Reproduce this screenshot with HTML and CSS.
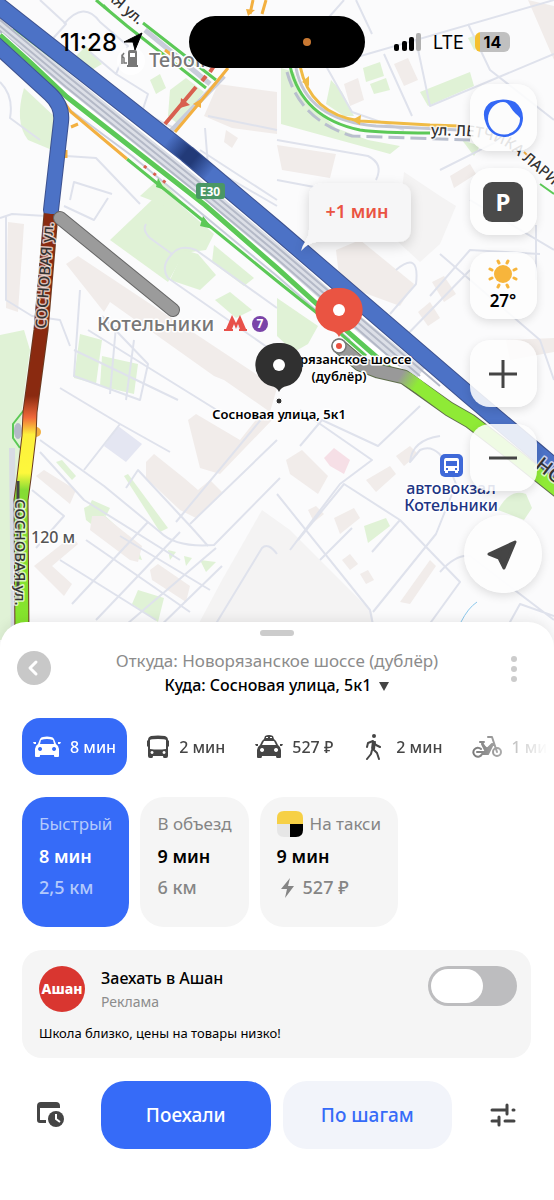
FILE: index.html
```
<!DOCTYPE html>
<html lang="ru">
	<head>
		<meta charset="UTF-8">
		<title>Маршрут</title>
		<meta name="viewport" content="width=device-width,initial-scale=1">
		<link rel="stylesheet" href="styles.css">
	</head>
	<body>
		<div class="map">
			<svg class="map_canvas" viewBox="0 0 554 640" preserveAspectRatio="xMidYMin slice">
				<defs>
					<linearGradient id="jam" gradientUnits="userSpaceOnUse" x1="0" y1="212" x2="0" y2="640">
						<stop offset="0" stop-color="#8a2a10"/>
						<stop offset=".43" stop-color="#8a2a10"/>
						<stop offset=".48" stop-color="#f0683a"/>
						<stop offset=".52" stop-color="#fdf03c"/>
						<stop offset=".61" stop-color="#fdf83c"/>
						<stop offset=".65" stop-color="#85dc34"/>
						<stop offset="1" stop-color="#85e62c"/>
					</linearGradient>
					<linearGradient id="dark" gradientUnits="userSpaceOnUse" x1="168" y1="140" x2="210" y2="174">
						<stop offset="0" stop-color="#223a78" stop-opacity="0"/>
						<stop offset=".4" stop-color="#223a78"/>
						<stop offset=".6" stop-color="#223a78"/>
						<stop offset="1" stop-color="#223a78" stop-opacity="0"/>
					</linearGradient>
					<linearGradient id="start" gradientUnits="userSpaceOnUse" x1="400" y1="376" x2="416" y2="386">
						<stop offset="0" stop-color="#999"/>
						<stop offset="1" stop-color="#8fea36"/>
					</linearGradient>
					<filter id="shadow" x="-30%" y="-30%" width="160%" height="180%">
						<feDropShadow dx="0" dy="4" stdDeviation="6" flood-color="#000" flood-opacity=".16"/>
					</filter>
					<path id="larina" d="M431 135 L468 136 Q498 139 512 151 L570 200"/>
				</defs>

				<!-- parks -->
				<g class="park">
					<path d="M0 335 L24 330 L30 350 L22 410 L14 640 L0 640Z"/>
					<path d="M24 88 L56 118 L52 150 L28 140 Q14 122 24 88Z"/>
					<path d="M152 200 L175 200 L214 234 L206 250 L184 253 L168 282 L110 240Z"/>
					<path d="M140 196 L160 178 L184 204 L176 210Z"/>
					<path d="M184 250 L198 254 L216 275 L200 290 L170 280Z"/>
					<path d="M214 245 L254 278 L244 286 L212 262Z"/>
					<path d="M215 300 L230 292 L252 310 L236 318Z"/>
					<path d="M80 334 L102 340 L96 384 L74 378Z"/>
					<path d="M102 356 L138 364 L134 394 L100 386Z"/>
					<path d="M281 68 L294 72 L304 98 L336 128 L368 140 L400 146 L390 154 L281 124Z"/>
					<path d="M331 80 L342 92 L354 116 L344 116 L326 104Z"/>
					<path d="M363 68 L380 62 L384 76 L366 82Z"/>
					<path d="M370 84 L386 78 L390 90 L374 94Z"/>
					<path d="M420 92 L470 72 L474 86 L428 106Z"/>
					<path d="M468 38 L484 32 L490 46 L474 50Z"/>
					<path d="M277 298 L318 326 L308 344 L294 352 L277 336Z"/>
					<path d="M364 526 L386 518 L390 526 L368 543Z"/>
					<path d="M132 604 L138 590 L164 598 L158 622Z"/>
					<path d="M84 508 L92 504 L136 544 L142 560 L134 558 L86 520Z"/>
					<path d="M168 550 L176 552 L170 560Z M184 556 L192 558 L186 566Z M200 560 L216 562 L206 572Z"/>
					<path d="M124 476 L128 474 L168 528 L160 532Z"/>
					<path d="M92 500 L110 508 L106 516 L88 508Z M56 462 L62 460 L76 476 L72 480Z"/>
					<path d="M498 510 Q510 488 526 494 L532 508 L524 520Z"/>
					<path d="M170 90 L186 78 L204 92 L178 124 L168 116Z"/>
					<path d="M72 60 L86 46 L102 64 L92 70Z M150 80 L160 74 L166 88 L156 94Z"/>
					<path d="M462 140 L480 146 L474 156Z M530 448 L544 460 L540 468Z"/>
				</g>

				<!-- buildings -->
				<g class="house">
					<path d="M204 116 L218 84 L277 92 L277 134 L232 128Z"/>
					<path d="M8 222 L24 224 L18 312 L6 308Z"/>
					<path d="M66 264 L78 256 L277 388 L270 412 L224 380 L214 376 L110 302 L104 312Z"/>
					<path d="M226 130 L238 138 L232 148 L224 142Z"/>
					<path d="M344 84 L358 78 L364 100 L350 106Z M394 64 L408 58 L418 80 L404 86Z"/>
					<path d="M336 250 L360 240 L414 284 L400 306 L340 284Z"/>
					<path d="M432 282 L444 276 L456 294 L444 302Z M418 312 L430 302 L440 318 L428 326Z"/>
					<path d="M286 460 L302 450 L328 476 L318 494 L290 474Z"/>
					<path d="M334 518 L354 508 L360 518 L340 534Z M308 510 L316 506 L324 514 L314 522Z"/>
					<path d="M400 602 L430 560 L436 566 L410 604Z M342 560 L350 554 L358 564 L350 570Z M360 574 L368 570 L374 580 L366 584Z"/>
					<path d="M188 420 L196 414 L240 440 L262 412 L272 420 L220 474 L200 468Z"/>
					<path d="M146 462 L154 454 L184 478 L198 490 L210 480 L222 492 L196 518 L180 510 L146 478Z"/>
					<path d="M36 476 L44 470 L76 490 L70 504Z M92 516 L104 516 L142 546 L138 562 L130 560 L90 530Z"/>
					<path d="M34 566 L72 536 L78 544 L52 566 L72 584 L64 596Z M150 570 L158 564 L190 586 L186 602 L152 580Z"/>
					<path d="M506 340 L554 338 L554 352 L510 360Z M528 0 L554 6 L554 60Z"/>
					<path d="M396 456 L410 446 L418 454 L404 466Z M366 480 L390 466 L396 474 L376 492Z"/>
					<path d="M277 145 L336 154 L330 178 L282 170Z M450 176 L470 164 L476 174 L454 188Z"/>
				</g>
				<path class="zone" d="M262 510 L290 530 L372 612 L376 640 L190 640 L222 580Z"/>
				<path class="zone" d="M404 172 L440 196 L456 206 L440 244 L420 262 L396 240Z"/>
				<path fill="#f6dfe6" d="M324 458 L334 448 L350 460 L344 474 L330 466Z"/>
				<path fill="#e4e6f2" d="M104 446 L118 426 L142 444 L126 462Z"/>

				<!-- side streets -->
				<g class="lane">
					<path d="M40 0 L66 24 L48 44 L88 84"/>
					<path d="M64 24 Q84 0 100 22 L128 46 L116 74 L90 52"/>
					<path d="M116 74 L148 94 L142 112 L178 130"/>
					<path d="M0 82 Q14 96 10 118 L40 140"/>
					<path d="M66 156 L96 158 L140 204 M70 200 L74 182 L112 194"/>
					<path d="M0 218 L12 214 L46 216 M6 216 L6 300 L32 316 L60 320 L70 346"/>
					<path d="M64 206 L94 220 L108 198"/>
					<path d="M146 224 Q142 230 150 238 L172 254 Q160 266 168 278 L277 354"/>
					<path d="M172 254 Q180 244 196 250 L277 308"/>
					<path d="M80 290 L74 376 L140 400 L148 364 L102 316"/>
					<path d="M88 330 L220 412 M74 350 L178 400 M116 326 L110 394 M134 340 L126 400"/>
					<path d="M40 440 L104 486 L160 532 Q176 548 214 545 L280 478"/>
					<path d="M40 452 L84 500 L180 560 M36 548 L64 516 L32 490"/>
					<path d="M84 470 L120 424 L60 388 M120 424 L170 452"/>
					<path d="M126 488 L138 470 L192 528 L208 546"/>
					<path d="M190 524 L277 440 M176 522 L264 416"/>
					<path d="M72 604 L148 522 M96 620 L180 532 M120 630 L216 548 M150 636 L222 566"/>
					<path d="M60 560 L156 620 M86 540 L190 612 M120 536 L210 590"/>
					<path d="M206 640 L262 548 Q268 542 277 554"/>
					<path d="M277 494 L370 610 L376 640 M290 550 L340 484 L372 460 L300 410"/>
					<path d="M298 540 L344 484 L400 520 L372 552 M320 560 L352 528 M400 520 L460 582 L418 640"/>
					<path d="M373 612 L436 534 L456 484 Q440 440 420 450 L410 462 Q412 440 440 436"/>
					<path d="M300 446 L322 420 L378 446 L420 406"/>
					<path d="M396 270 Q420 250 416 284 L390 314 M430 296 L470 250 L540 254"/>
					<path d="M340 300 L398 344 L470 270 M398 344 L500 420"/>
					<path d="M277 180 L330 190 L400 236 M277 140 L368 156 Q384 164 376 180"/>
					<path d="M326 66 L352 112 L404 130 M326 66 L554 0 M384 54 L412 116 M300 50 L344 0 M356 0 L372 34"/>
					<path d="M416 40 L430 106 L554 54 M468 24 L490 70 L554 120"/>
					<path d="M205 128 L208 166 L277 206 M208 116 L277 130 M200 150 L277 200"/>
					<path d="M440 170 L520 130 M470 200 L554 250 M536 225 L536 280 M440 254 L540 340 L554 380"/>
					<path d="M440 572 Q456 554 470 556 L554 620 M500 640 L520 604 L554 616"/>
				</g>
				<path fill="none" stroke="#8cc8ec" stroke-width="1" d="M461 622 Q468 608 477 602"/>

				<!-- highway -->
				<g fill="none">
					<path stroke="#fff" stroke-width="30" d="M-6 18 L66 79 L200 181 L277 248 L354 316 L430 376"/>
					<path stroke="#dcdfe7" stroke-width="14" d="M-6 20 L66 80 L200 188 L277 252 L354 320 L420 374"/>
					<path class="stripes" d="M-6 15 L66 75 L200 183 L277 247 L440 386"/>
					<path class="stripes" d="M-6 21 L66 81 L200 189 L277 253 L420 376"/>
					<path class="stripes" d="M-6 26 L66 87 L200 195 L277 259 L400 366"/>
					<path class="stripes thin" d="M62 104 L132 156 L277 276 L350 340"/>
					<path class="green_line" d="M14 28 L66 68 L166 141 L236 201 L277 237 L310 266"/>
					<path stroke="#fff" stroke-width="7" d="M0 35 L30 62 L67 97 L205 205 L277 268 L340 325 L396 374"/>
					<path stroke="#5cc957" stroke-width="5" d="M0 35 L30 62 L67 97 L205 205 L277 268 L340 325 L396 374"/>
					<path class="green_line" d="M127 159 L190 210 L277 281 L317 313 L366 356"/>
					<path stroke="#f3b040" stroke-width="3" d="M64 102 L71 112 L127 159 M71 127 L78 124 M66 150 L66 158"/>
					<path stroke="#d8604f" stroke-width="3" stroke-dasharray="3 9" d="M144 166 L170 186"/>
					<path fill="#5cc957" d="M203 216 L213 229 L200 226Z M158 178 L165 190 L156 187Z"/>
				</g>

				<!-- streets with traffic -->
				<g fill="none">
					<path stroke="#c9cdda" stroke-width="5" d="M145 30 L210 84 M224 76 L170 132"/>
					<path class="green_line" d="M96 0 L127 26 L206 88 M143 23 L216 80"/>
					<path stroke="#f3b040" stroke-width="3" d="M228 68 L201 101 L175 132 M253 0 L250 14 M266 0 L262 14 M165 50 L173 56"/>
					<path stroke="#d8604f" stroke-width="4" d="M214 66 L210 72 M206 76 L202 81 M196 87 L165 124"/>
					<path fill="#d8604f" d="M181 98 L180 108 L190 105Z"/>
					<path fill="#f3b040" d="M201 99 L193 104 L201 108Z M248 16 L255 10 L246 9Z"/>
					<path fill="#5cc957" d="M110 10 L103 8 L104 4Z"/>
					<path stroke="#b9bfce" stroke-width="3" stroke-dasharray="16 6" d="M287 72 Q300 120 352 136 L470 140"/>
					<path stroke="#c3c7d4" stroke-width="3" d="M296 68 Q306 120 376 126 L460 130"/>
					<path class="green_line" d="M290 66 Q302 118 360 130 Q380 133 430 133"/>
					<path stroke="#f0bb45" stroke-width="3" d="M300 66 Q310 114 360 121 L430 125 L459 126"/>
					<path fill="#f0bb45" d="M302 82 L309 76 L309 86Z M352 120 L361 115 L360 125Z"/>
					<path stroke="#f3b040" stroke-width="2" d="M524 152 L532 160"/>
					<path stroke="#5cc957" stroke-width="2" d="M540 184 L554 194"/>
					<path stroke="#d8dbe4" stroke-width="6" d="M12 448 L14 640"/>
					<path stroke="#5cc957" stroke-width="2" d="M24 410 L13 424 L13 438 L20 448"/>
					<circle cx="36" cy="432" r="5" fill="#f3b040"/>
				</g>
				<ellipse cx="18" cy="431" rx="4" ry="8" fill="#b4b9c8"/>

				<!-- routes -->
				<g class="route">
					<path stroke="#3d5290" stroke-width="18" d="M-10 -1 L0 7 L187 154 L277 230 L470 396 L540 455 L570 480"/>
					<path stroke="#4c72c6" stroke-width="16" d="M-10 -1 L0 7 L187 154 L277 230 L470 396 L540 455 L570 480"/>
					<path stroke="url(#dark)" stroke-width="16" stroke-linecap="butt" d="M168 139 L187 154 L210 173"/>
					<path stroke="#3d5290" stroke-width="16" d="M-8 41 L50 94 Q63 106 61 122 L51 210"/>
					<path stroke="#4c72c6" stroke-width="14" d="M-8 41 L50 94 Q63 106 61 122 L51 210"/>
					<path stroke="#6b3a20" stroke-width="15" stroke-linecap="butt" d="M51 214 L41 330 L30 412 L29 436 L24 478 L21 500 L22 640"/>
					<path stroke="url(#jam)" stroke-width="13" stroke-linecap="butt" d="M51 214 L41 330 L30 412 L29 436 L24 478 L21 500 L22 640"/>
					<path stroke="#666" stroke-width="14" d="M60 218 L173 310"/>
					<path stroke="#9b9b9b" stroke-width="12" d="M60 218 L173 310"/>
					<path stroke="#5f6e4c" stroke-width="15" d="M339 346 L360 364 L378 371 L404 377 L449 409 L470 421 L500 444 L570 500"/>
					<path stroke="#8fea36" stroke-width="13" d="M408 379 L449 409 L470 421 L500 444 L570 500"/>
					<path stroke="url(#start)" stroke-width="13" d="M339 346 L360 364 L378 371 L404 377 L418 386"/>
				</g>
				<path stroke="#444" stroke-width="3" d="M18 481 L18 600"/>

				<!-- captions -->
				<g class="label">
					<text class="street" transform="translate(46 329) rotate(-86)">СОСНОВАЯ ул.</text>
					<text class="street" transform="translate(15 499) rotate(90)">СОСНОВАЯ ул.</text>
					<text class="street" transform="translate(105 -3) rotate(40)">АЯ ул.</text>
					<text class="street"><textPath href="#larina">ул. ЛЕТЧИКА ЛАРИНА</textPath></text>
					<text class="street big" transform="translate(534 467) rotate(38)">НО</text>
					<text class="place" x="149" y="67">Teboil</text>
					<text class="place" x="97" y="331">Котельники</text>
					<text class="scale" x="31" y="543">120 м</text>
				</g>
				<circle cx="131" cy="61" r="14" fill="#fff" opacity=".8"/>
				<path fill="#777" fill-rule="evenodd" d="M128 52 q0 -2 2 -2 h5 q2 0 2 2 v13 h1 v2 h-11 v-2 h1Z M130 53 v4 h5 v-4Z"/>
				<path fill="none" stroke="#777" stroke-width="1.5" d="M127 63 h-3 v-5 l-2 -2 v8 M122 56 l2 -3"/>
				<path fill="#e8504a" d="M224 331 V329 H226 L232 315 L236 323 L240 315 L246 329 H247 V331 H239 V329 H240 L238 324 L236 329 L234 324 L232 329 H233 V331Z"/>
				<circle cx="260" cy="324" r="8" fill="#7a44a8"/>
				<text class="line_no" x="260" y="328">7</text>
				<rect x="196" y="183" width="29" height="16" rx="3" fill="#4a9765"/>
				<text class="road_no" x="210" y="196">E30</text>

				<g fill="#3f69d8">
					<rect x="440" y="454" width="23" height="23" rx="5"/>
					<path fill="#fff" fill-rule="evenodd" d="M446 458 h11 q2 0 2 3 v10 h-1 v2 h-3 v-2 h-7 v2 h-3 v-2 h-1 v-10 q0 -3 2 -3Z M446 461 v5 h11 v-5Z M446 468 v2 h2 v-2Z M455 468 v2 h2 v-2Z"/>
				</g>
				<g class="label station">
					<text x="451" y="494">автовокзал</text>
					<text x="451" y="511">Котельники</text>
				</g>

				<g filter="url(#shadow)">
					<path fill="#f6f6f7" d="M325 183 H397 Q411 183 411 197 V228 Q411 242 397 242 H316 Q308 243 301 251 Q302 246 306 240 Q309 236 309 230 V197 Q309 183 325 183Z"/>
				</g>
				<text class="delay" x="357" y="218">+1 мин</text>

				<!-- pins -->
				<circle cx="339" cy="346" r="7" fill="#fff" stroke="#777" stroke-width="1.5"/>
				<circle cx="339" cy="346" r="3" fill="#e8503f"/>
				<g class="label point">
					<text x="339" y="364">Новорязанское шоссе</text>
					<text x="339" y="381">(дублёр)</text>
					<text x="279" y="419">Сосновая улица, 5к1</text>
				</g>
				<path fill="#ea5442" d="M339 288 a22 22 0 0 1 8 43 q-6 1 -8 6 q-2 -5 -8 -6 a22 22 0 0 1 8 -43Z"/>
				<circle cx="339" cy="310" r="6" fill="#fff"/>
				<path fill="#303030" d="M279 343 a22 22 0 0 1 8 43 q-6 1 -8 6 q-2 -5 -8 -6 a22 22 0 0 1 8 -43Z"/>
				<circle cx="279" cy="365" r="6" fill="#fff"/>
				<circle cx="279" cy="401" r="3" fill="#303030" stroke="#fff" stroke-width="1"/>
			</svg>

			<div class="status">
				<div class="status_left">
					<span class="time">11:28</span>
					<svg width="21" height="20" viewBox="0 0 21 20"><path stroke="#000" stroke-linejoin="round" d="M20 1 L13 18 L11 10 L2 10Z"/></svg>
				</div>
				<div class="island"><span class="island_dot"></span></div>
				<div class="status_right">
					<svg width="28" height="18" viewBox="0 0 28 18">
						<rect x="0" y="11" width="5" height="7" rx="2"/>
						<rect x="8" y="8" width="5" height="10" rx="2"/>
						<rect x="15" y="4" width="5" height="14" rx="2"/>
						<rect x="22" y="0" width="5" height="18" rx="2" fill="#b0b0b0"/>
					</svg>
					<span class="net">LTE</span>
					<span class="battery">14</span>
				</div>
			</div>

			<div class="controls">
				<button class="tool" aria-label="Алиса">
					<svg width="42" height="40" viewBox="0 0 42 40">
						<path fill="#3468f5" d="M9 4 Q21 -1 33 4 Q41 10 41 20 A19 19 0 0 1 4 26 Q-2 11 9 4Z"/>
						<path fill="#fcfcfc" d="M21 4 C25 4 27 7 29 10 C31 14 36 17 38 20 A16 16 0 0 1 6 21 C6 11 14 4 21 4Z"/>
					</svg>
				</button>
				<button class="tool" aria-label="Парковки"><span class="parking">P</span></button>
				<button class="tool weather">
					<svg width="30" height="30" viewBox="0 0 30 30">
						<circle cx="15" cy="15" r="9" fill="#f7b53c"/>
						<path stroke="#f7b53c" stroke-width="3" stroke-linecap="round" d="M11 4 L10 2 M19 4 L20 2 M26 11 L28 10 M26 19 L28 20 M19 26 L20 28 M11 26 L10 28 M4 19 L2 20 M4 11 L2 10"/>
					</svg>
					<span>27°</span>
				</button>
				<button class="tool zoom_in" aria-label="Приблизить">
					<svg width="28" height="28" viewBox="0 0 28 28"><path stroke="#444" stroke-width="3" d="M14 0 V28 M0 14 H28"/></svg>
				</button>
				<button class="tool" aria-label="Отдалить">
					<svg width="28" height="28" viewBox="0 0 28 28"><path stroke="#444" stroke-width="3" d="M0 14 H28"/></svg>
				</button>
				<button class="tool locate" aria-label="Моё местоположение">
					<svg width="34" height="34" viewBox="0 0 34 34"><path fill="#454545" stroke="#454545" stroke-width="3" stroke-linejoin="round" d="M29 5 L18 31 L13 21 L3 17Z"/></svg>
				</button>
			</div>
		</div>

		<div class="sheet">
			<div class="handle"></div>
			<div class="head">
				<button class="back" aria-label="Назад">
					<svg width="34" height="34" viewBox="0 0 34 34"><path fill="none" stroke="#fff" stroke-width="3" stroke-linecap="round" stroke-linejoin="round" d="M19 11 L13 17 L19 23"/></svg>
				</button>
				<div class="address">
					<a class="from" href="#">Откуда: Новорязанское шоссе (дублёр)</a>
					<a class="to" href="#">Куда: Сосновая улица, 5к1 <i class="arrow"></i></a>
				</div>
				<button class="more" aria-label="Ещё"><i></i><i></i><i></i></button>
			</div>

			<div class="modes">
				<button class="mode active">
					<svg width="28" height="24" viewBox="0 0 28 24"><path fill="currentColor" fill-rule="evenodd" d="M7 4 Q8 2 10 2 Q14 1 18 2 Q20 2 21 4 L23 9 Q26 11 26 14 V21 q0 1 -1 1 h-3 q-1 0 -1 -1 v-1 H7 v1 q0 1 -1 1 H3 q-1 0 -1 -1 V14 Q2 11 5 9Z M8 5 L7 9 H21 L20 5 Q14 3 8 5Z M7 12 a2 2 0 1 0 0.1 0Z M21 12 a2 2 0 1 0 0.1 0Z M0 7 h3 v2 h-2Z M25 7 h3 l-1 2 h-2Z"/></svg>
					8 мин
				</button>
				<button class="mode">
					<svg width="24" height="24" viewBox="0 0 24 24"><path fill="currentColor" fill-rule="evenodd" d="M5 1 Q12 0 19 1 Q22 2 22 5 L23 6 V11 L22 12 V21 q0 2 -2 2 h-2 q-1 0 -1 -2 H7 q0 2 -1 2 H4 q-2 0 -2 -2 V12 L1 11 V6 L2 5 Q2 2 5 1Z M4 5 V14 Q12 15 20 14 V5 Q19 4 12 4 Q5 4 4 5Z M6 16 a1.500 1.500 0 1 0 .1 0Z M18 16 a1.500 1.500 0 1 0 .1 0Z"/></svg>
					2 мин
				</button>
				<button class="mode">
					<svg width="28" height="24" viewBox="0 0 28 24"><path fill="currentColor" fill-rule="evenodd" d="M10 1 Q14 -1 18 1 L19 4 L21 6 L23 10 Q26 12 26 15 V22 q0 1 -1 1 h-3 q-1 0 -1 -2 H7 q0 2 -1 2 H3 q-1 0 -1 -1 V15 Q2 12 5 10 L7 6 L9 4Z M9 6 L7 10 H21 L19 6Z M7 13 a2 2 0 1 0 .1 0Z M21 13 a2 2 0 1 0 .1 0Z M0 9 h3 v2 h-2Z M25 9 h3 l-1 2 h-2Z M11 2 h2 v1 h-2Z M15 2 h2 v1 h-2Z"/></svg>
					527 ₽
				</button>
				<button class="mode">
					<svg width="24" height="26" viewBox="0 0 24 26"><circle cx="11" cy="2" r="2" fill="currentColor"/><path fill="none" stroke="currentColor" stroke-width="2" stroke-linecap="round" stroke-linejoin="round" d="M4 13 L5 9 L10 7 L13 11 L17 13 M11 8 L10 15 L14 19 L16 25 M9 16 L8 20 L4 25"/><path stroke="currentColor" stroke-width="4" d="M11 7 L10 15"/></svg>
					2 мин
				</button>
				<button class="mode">
					<svg width="30" height="24" viewBox="0 0 30 24"><g fill="none" stroke="currentColor" stroke-width="2" stroke-linecap="round" stroke-linejoin="round"><circle cx="25" cy="17" r="4"/><path d="M9 14 A4.500 4.500 0 1 0 10 19 H16 L21 9 M8 7 H12 M10 7 L15 18 M5 17 H15 M16 2 H20 L25 17"/><path fill="currentColor" d="M10 9 L15 19 L20 9 L15 14Z"/></g></svg>
					1 мин
				</button>
			</div>

			<div class="cards">
				<button class="card active">
					<span class="card_name">Быстрый</span>
					<b>8 мин</b>
					<span class="card_info">2,5 км</span>
				</button>
				<button class="card">
					<span class="card_name">В объезд</span>
					<b>9 мин</b>
					<span class="card_info">6 км</span>
				</button>
				<button class="card">
					<span class="card_name">
						<svg width="26" height="26" viewBox="0 0 26 26"><path fill="#f6d046" d="M0 13 V7 Q0 0 7 0 H19 Q26 0 26 7 V13Z"/><path fill="#e6e6e6" d="M0 13 H13 V26 H7 Q0 26 0 19Z"/><path d="M13 13 H26 V19 Q26 26 19 26 H13Z"/></svg>
						На такси
					</span>
					<b>9 мин</b>
					<span class="card_info">
						<svg width="22" height="22" viewBox="0 0 22 22"><path fill="#858585" d="M13 1 L4 12 H10 L8 21 L17 9 H11Z"/></svg>
						527 ₽
					</span>
				</button>
			</div>

			<div class="ad">
				<div class="ad_top">
					<div class="ad_logo">Ашан</div>
					<label class="ad_text" for="stop">
						<span class="ad_title">Заехать в Ашан</span>
						<span class="ad_mark">Реклама</span>
					</label>
					<input class="switch" type="checkbox" id="stop">
				</div>
				<p>Школа близко, цены на товары низко!</p>
			</div>

			<div class="actions">
				<button class="icon_btn" aria-label="Время поездки">
					<svg width="28" height="28" viewBox="0 0 28 28"><path fill="#454545" d="M0 5 Q0 1 4 1 H19 Q23 1 23 5 V7 H3 V19 H9 V22 H3 Q0 22 0 19Z"/><circle cx="19" cy="18" r="10" fill="#fff"/><circle cx="19" cy="18" r="8" fill="#454545"/><path fill="none" stroke="#fff" stroke-width="2" d="M19 13 V18 L23 21"/></svg>
				</button>
				<button class="go">Поехали</button>
				<button class="steps">По шагам</button>
				<button class="icon_btn last" aria-label="Настройки">
					<svg width="26" height="24" viewBox="0 0 26 24"><path fill="none" stroke="#454545" stroke-width="3" stroke-linecap="round" d="M2 7 H17 M17 2 V11 M23 7 H24 M2 18 H9 M9 14 V22 M15 18 H24"/></svg>
				</button>
			</div>
		</div>
	</body>
</html>
```
FILE: styles.css
```
* {
	box-sizing: border-box;
	margin: 0;
	padding: 0;
}
body {
	display: flex;
	flex-direction: column;
	min-height: 100vh;
	background: #fff;
	color: #000;
	font-family: "Noto Sans", sans-serif;
	font-size: 16px;
}
button {
	border: none;
	background: none;
	color: inherit;
	font: inherit;
	cursor: pointer;
}
a {
	color: inherit;
	text-decoration: none;
}
svg {
	display: block;
	flex: none;
}

/* map */
.map {
	position: relative;
	flex: 1;
	min-height: 620px;
	background: #fbfbfc;
}
.map_canvas {
	position: absolute;
	top: 0;
	left: 0;
	width: 100%;
	height: 100%;
}
.park {
	fill: #e0f2d6;
}
.house {
	fill: #f1ecea;
}
.zone {
	fill: #f4f3f3;
}
.lane {
	fill: none;
	stroke: #dfe2ec;
	stroke-width: 2;
	stroke-linejoin: round;
}
.stripes {
	stroke: #b4b9c7;
	stroke-width: 2;
}
.stripes.thin {
	stroke: #c9cdda;
}
.green_line {
	stroke: #5cc957;
	stroke-width: 3;
}
.route {
	fill: none;
	stroke-linecap: round;
	stroke-linejoin: round;
}
.label text {
	paint-order: stroke;
	stroke: #fff;
	stroke-width: 3px;
	stroke-linejoin: round;
}
.label .street {
	font-size: 15px;
	font-weight: 500;
	fill: #333;
	stroke: rgba(255, 255, 255, .7);
}
.label .big {
	font-size: 20px;
}
.label .place {
	font-size: 20px;
	font-weight: 500;
	fill: #777;
}
.label .scale {
	font-size: 16px;
	font-weight: 500;
	fill: #555;
}
.line_no {
	font-size: 12px;
	font-weight: 700;
	fill: #fff;
	text-anchor: middle;
}
.road_no {
	font-size: 12px;
	font-weight: 700;
	fill: #fff;
	text-anchor: middle;
}
.station {
	font-size: 16px;
	font-weight: 500;
	fill: #1d3584;
	text-anchor: middle;
}
.delay {
	font-size: 18px;
	font-weight: 600;
	fill: #ea5442;
	text-anchor: middle;
}
.point {
	font-size: 13px;
	font-weight: 600;
	text-anchor: middle;
}

/* status bar */
.status {
	position: relative;
	display: grid;
	grid-template-columns: 1fr auto 1fr;
	align-items: center;
	height: 84px;
	font-family: Inter, sans-serif;
}
.status_left,
.status_right {
	display: flex;
	align-items: center;
}
.status_left {
	justify-content: flex-end;
	gap: 5px;
	padding-right: 46px;
}
.status_right {
	gap: 11px;
	padding-left: 29px;
}
.time {
	font-size: 24px;
	font-weight: 500;
}
.island {
	display: flex;
	align-items: center;
	justify-content: flex-end;
	width: 176px;
	height: 52px;
	padding-right: 54px;
	border-radius: 26px;
	background: #000;
}
.island_dot {
	width: 8px;
	height: 8px;
	border-radius: 50%;
	background: #c87832;
}
.net {
	font-size: 18px;
}
.battery {
	width: 35px;
	border-radius: 6px;
	background: linear-gradient(90deg, #f5c02e 5px, #c0c0c0 5px);
	font-size: 16px;
	font-weight: 700;
	line-height: 20px;
	text-align: center;
}

/* right column */
.controls {
	position: relative;
	display: flex;
	flex-direction: column;
	align-items: center;
	gap: 17px;
	width: 78px;
	margin-left: auto;
	margin-right: 12px;
	padding-bottom: 44px;
}
.tool {
	display: flex;
	flex-direction: column;
	align-items: center;
	justify-content: center;
	width: 67px;
	height: 67px;
	border-radius: 20px;
	background: rgba(253, 253, 253, .88);
	box-shadow: 0 3px 10px rgba(0, 0, 0, .12);
}
.parking {
	width: 40px;
	border-radius: 9px;
	background: #4a4a4a;
	color: #fff;
	font-size: 24px;
	font-weight: 700;
	line-height: 40px;
}
.weather {
	font-size: 17px;
	font-weight: 600;
	line-height: 24px;
}
.zoom_in {
	margin-top: 4px;
}
.locate {
	width: 78px;
	height: 78px;
	margin-top: 7px;
	border-radius: 50%;
	background: rgba(253, 253, 253, .96);
}

/* bottom sheet */
.sheet {
	position: relative;
	margin-top: -18px;
	padding: 8px 22px 51px;
	border-radius: 26px 26px 0 0;
	background: #fff;
	box-shadow: 0 -2px 12px rgba(0, 0, 0, .08);
}
.handle {
	width: 34px;
	height: 6px;
	margin: 0 auto 12px;
	border-radius: 3px;
	background: #ccc;
}
.head {
	display: flex;
	align-items: flex-start;
	justify-content: space-between;
	margin: 0 -5px;
}
.back {
	width: 34px;
	height: 34px;
	margin-top: 3px;
	border-radius: 50%;
	background: #c8c8c8;
}
.address {
	display: flex;
	flex-direction: column;
	align-items: center;
	font-size: 17px;
	line-height: 25px;
}
.from {
	color: #8c8c8c;
}
.to {
	font-size: 16px;
	font-weight: 500;
}
.arrow {
	display: inline-block;
	margin-left: 4px;
	border: 5px solid transparent;
	border-top: 9px solid #444;
	border-bottom: 0;
}
.more {
	display: flex;
	flex-direction: column;
	gap: 4px;
	width: 34px;
	padding: 8px;
}
.more i {
	width: 6px;
	height: 6px;
	border-radius: 50%;
	background: #ccc;
}
.modes {
	display: flex;
	gap: 8px;
	margin-top: 20px;
	margin-right: -22px;
	overflow: hidden;
	-webkit-mask-image: linear-gradient(90deg, #000 calc(100% - 110px), transparent calc(100% - 6px));
	mask-image: linear-gradient(90deg, #000 calc(100% - 110px), transparent calc(100% - 6px));
}
.mode {
	display: flex;
	flex: none;
	align-items: center;
	gap: 9px;
	height: 57px;
	padding: 0 11px;
	border-radius: 18px;
	color: #454545;
	font-size: 16px;
	font-weight: 500;
}
.mode.active {
	background: #366bf8;
	color: #fff;
}
.cards {
	display: flex;
	gap: 11px;
	margin-top: 22px;
}
.card {
	display: flex;
	flex-direction: column;
	align-items: flex-start;
	height: 130px;
	padding: 12px 17px;
	border-radius: 24px;
	background: #f5f5f5;
	color: #858585;
	text-align: left;
}
.card_name,
.card_info {
	display: flex;
	align-items: center;
}
.card_name {
	gap: 7px;
	font-size: 17px;
	line-height: 30px;
}
.card b {
	color: #000;
	font-size: 18px;
	font-weight: 600;
	line-height: 35px;
}
.card_info {
	gap: 4px;
	font-size: 18px;
	font-weight: 500;
	line-height: 27px;
}
.card.active {
	background: #366bf8;
	color: #b3c9fc;
}
.card.active b {
	color: #fff;
}
.ad {
	margin: 23px 1px 0 0;
	padding: 16px 14px 15px 17px;
	border-radius: 20px;
	background: #f5f5f5;
}
.ad_top {
	display: flex;
	align-items: flex-start;
}
.ad_logo {
	width: 46px;
	border-radius: 50%;
	background: #d93630;
	color: #fff;
	font-size: 14px;
	font-weight: 800;
	line-height: 46px;
	text-align: center;
}
.ad_text {
	display: flex;
	flex: 1;
	flex-direction: column;
	margin-left: 16px;
}
.ad_title {
	font-size: 16px;
	font-weight: 500;
	line-height: 24px;
}
.ad_mark {
	color: #8c8c8c;
	font-size: 14px;
	line-height: 24px;
}
.switch {
	-webkit-appearance: none;
	appearance: none;
	width: 89px;
	height: 40px;
	padding: 3px;
	border-radius: 20px;
	background: #bdbdbf;
	cursor: pointer;
}
.switch:before {
	content: "";
	display: block;
	width: 52px;
	height: 34px;
	border-radius: 17px;
	background: #fff;
}
.switch:checked {
	background: #366bf8;
}
.switch:checked:before {
	margin-left: auto;
}
.ad p {
	margin-top: 9px;
	font-size: 13px;
	line-height: 20px;
}
.actions {
	display: flex;
	gap: 12px;
	margin: 23px 1px 0 0;
}
.icon_btn {
	display: flex;
	align-items: center;
	width: 67px;
	padding: 0 15px;
}
.icon_btn.last {
	justify-content: flex-end;
}
.go,
.steps {
	flex: 1;
	height: 68px;
	border-radius: 24px;
	font-size: 19px;
	font-weight: 500;
}
.go {
	background: #366bf8;
	color: #fff;
}
.steps {
	background: #f2f4fa;
	color: #366bf8;
}
```
